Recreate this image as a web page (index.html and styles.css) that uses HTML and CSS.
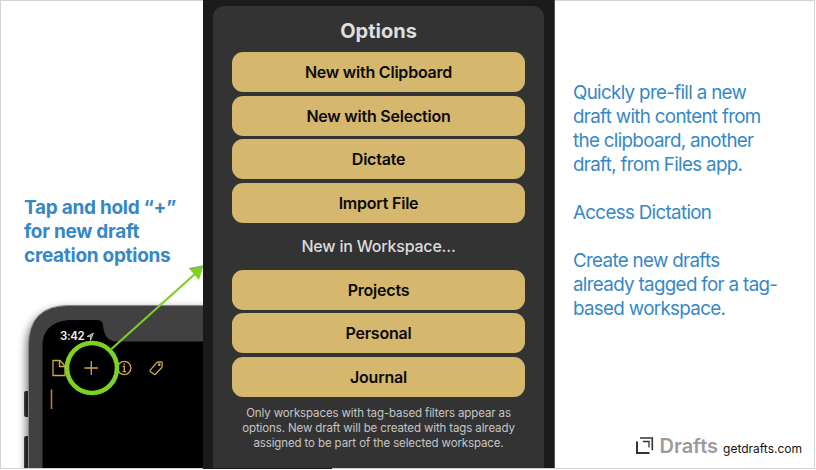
FILE: index.html
```html
<!DOCTYPE html>
<html lang="en">
<head>
<meta charset="utf-8">
<title>Drafts - New draft options</title>
<link rel="stylesheet" href="styles.css">
</head>
<body>
<main class="slide">
  <section class="intro">
    <h1 class="headline">Tap and hold “+”<br>for new draft<br>creation options</h1>
    <div class="phone">
      <svg class="device" width="202" height="174" viewBox="1 294 202 174">
        <defs>
          <filter id="soft" x="-20%" y="-20%" width="140%" height="140%"><feGaussianBlur stdDeviation="4"/></filter>
          <linearGradient id="side" x1="0" x2="1"><stop offset="0" stop-color="#444"/><stop offset=".3" stop-color="#202020"/><stop offset="1" stop-color="#292929"/></linearGradient>
        </defs>
        <path d="M26 480V350Q26 309 68 308H210V480Z" fill="#000" opacity=".5" filter="url(#soft)"/>
        <rect x="24" y="391" width="7" height="26" rx="2" fill="url(#side)"/>
        <rect x="24" y="436" width="7" height="40" rx="2" fill="url(#side)"/>
        <path d="M28.500 480V346Q28.500 305.500 69 305.500H210V480Z" fill="#414141" stroke="#858786"/>
        <path d="M42.500 480V346C42.500 329 54 320 72 320H97Q102.500 320 103 325C103.500 335 108 341.500 117 341.500H210V480Z" fill="#000"/>
        <path d="M87 336.500L93.500 333L90.500 340.500V336.500Z" fill="#999" stroke="#ccc" stroke-width=".8"/>
        <g fill="none" stroke="#d0a84e" stroke-width="1.300">
          <path d="M53 360.500H60L65 366V375.500H53ZM59.500 360.500V366.500H65"/>
          <path d="M84.500 368H98M91.300 361V375"/>
          <circle cx="124.300" cy="368" r="6.600"/>
          <path d="M122.600 366.300H124.300V371.500M122.500 371.600H126M124.300 363.500V364.900"/>
          <path d="M150.200 370.200L156.500 362.900Q157.300 362.100 158.500 362L161.100 361.900Q162.500 362 162.400 363.400L162 366.600Q161.900 367.500 161.200 368.200L155.300 374.200Q154.500 374.800 153.700 374.100L150.300 371.500Q149.600 370.900 150.200 370.200Z"/>
          <circle cx="159.300" cy="364.700" r=".7"/>
        </g>
        <path d="M51.500 389.500V409" stroke="#b67a46" stroke-width="1.600"/>
      </svg>
      <span class="clock">3:42</span>
    </div>
  </section>

  <section class="screen">
    <div class="card">
      <h2 class="title">Options</h2>
      <div class="group">
        <button class="option">New with Clipboard</button>
        <button class="option">New with Selection</button>
        <button class="option">Dictate</button>
        <button class="option">Import File</button>
      </div>
      <h3 class="subtitle">New in Workspace...</h3>
      <div class="group">
        <button class="option">Projects</button>
        <button class="option">Personal</button>
        <button class="option">Journal</button>
      </div>
      <p class="note">Only workspaces with tag-based filters appear as<br>options. New draft will be created with tags already<br>assigned to be part of the selected workspace.</p>
    </div>
  </section>

  <section class="details">
    <div class="copy">
      <p>Quickly pre-fill a new<br>draft with content from<br>the clipboard, another<br>draft, from Files app.</p>
      <p>Access Dictation</p>
      <p>Create new drafts<br>already tagged for a tag-<br>based workspace.</p>
    </div>
    <footer class="brand">
      <svg width="18" height="18" viewBox="0 0 18 18" fill="none" stroke="#333"><path d="M4 1H16.300V13.200" stroke-width="1.600"/><path d="M1 4.500V16H13.500" stroke-width="2"/><path d="M7 4.500H13V10.500" stroke-width="1.300"/></svg>
      <span class="name">Drafts</span>
      <span class="site">getdrafts.com</span>
    </footer>
  </section>

  <svg class="pointer" width="332" height="469" viewBox="0 0 332 469">
    <circle cx="92" cy="368" r="25" fill="none" stroke="#7ed321" stroke-width="4.600"/>
    <path d="M111.500 348.500L195 274" stroke="#777" stroke-opacity=".5" stroke-width="1.800"/>
    <path d="M111.500 349L196 273" stroke="#7ed321" stroke-width="1.800"/>
    <path d="M189 268.500L203 265.800V267L199 280Z" fill="#7ed321"/>
    <path d="M189 268.500L203 265.800" stroke="#888" stroke-width=".8"/>
    <path d="M203 468.500H332" stroke="#1b1b1b"/>
  </svg>
</main>
</body>
</html>
```
FILE: styles.css
```css
* { box-sizing: border-box; }
body { margin: 0; background: #fff; font-family: Inter, "Liberation Sans", sans-serif; }
h1, h2, h3, p { margin: 0; }
svg { display: block; }
.slide {
  position: relative;
  display: grid;
  grid-template-columns: 202px 352px 1fr;
  width: 815px;
  height: 469px;
  border: 1px solid #d3d3d3;
  white-space: nowrap;
}
.intro { display: flex; flex-direction: column; justify-content: space-between; padding-top: 195px; }
.headline { padding-left: 23px; font-size: 19px; line-height: 24px; font-weight: 700; letter-spacing: -.28px; color: #3588c8; }
.phone { position: relative; }
.clock { position: absolute; left: 59px; top: 35px; font-size: 11.500px; line-height: 14px; font-weight: 600; letter-spacing: -.4px; color: #eee; }
.screen { background: #1b1b1b; margin-top: -1px; padding: 6px 10px 0; border-right: 1px solid #555; }
.card { height: 100%; padding: 12px 19px 0; border-radius: 11px 11px 0 0; background: #333; text-align: center; }
.title { font-size: 20px; line-height: 26px; font-weight: 700; color: #dedede; margin-bottom: 8px; }
.group { display: flex; flex-direction: column; gap: 3.500px; }
.option {
  height: 40px;
  padding: 0;
  border: 0;
  border-radius: 11px;
  background: #d5b86d;
  color: #0b0a06;
  font: 600 16px/40px Inter, "Liberation Sans", sans-serif;
  letter-spacing: -.22px;
}
.subtitle { font-size: 16px; line-height: 47px; font-weight: 500; letter-spacing: -.2px; color: #dcdcdc; }
.note { margin-top: 9px; font-size: 11.500px; line-height: 15.200px; letter-spacing: -.12px; color: #c6c6c6; }
.details { display: flex; flex-direction: column; justify-content: space-between; padding: 80px 12px 10px 18px; }
.copy { display: grid; gap: 24px; font-size: 18.800px; line-height: 24px; letter-spacing: -.68px; color: #3588c8; }
.brand { display: flex; align-items: baseline; justify-content: flex-end; }
.brand svg { align-self: center; margin-right: 5px; }
.name { font-size: 20px; line-height: 24px; font-weight: 600; color: #9b9b9b; margin-right: 5px; }
.site { font-size: 12px; color: #111; }
.pointer { position: absolute; left: -1px; top: -1px; }
```
